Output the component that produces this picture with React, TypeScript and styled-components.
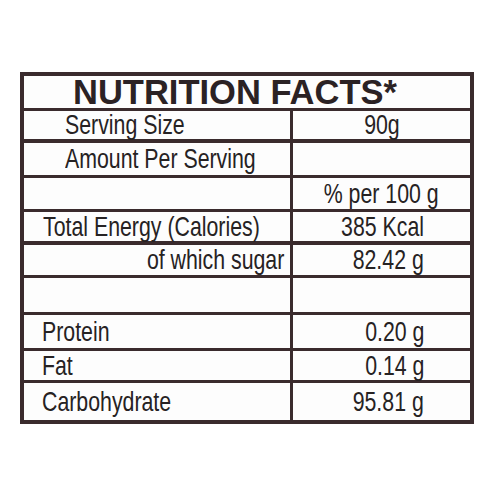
import React from "react";
import styled, { createGlobalStyle } from "styled-components";

const GlobalStyle = createGlobalStyle`
  html, body {
    margin: 0;
    padding: 0;
    background: #ffffff;
  }
  body {
    font-family: "Liberation Sans", Arial, sans-serif;
  }
`;

const Page = styled.div`
  width: 500px;
  height: 500px;
  box-sizing: border-box;
  padding: 72px 0 0 20px;
`;

const Label = styled.div`
  width: 454px;
  box-sizing: border-box;
  border: 4px solid #3a2b2d;
  background: #fdfdfd;
  color: #262223;
`;

const Title = styled.div`
  height: 35px;
  box-sizing: border-box;
  border-bottom: 3px solid #3a2b2d;
  padding-left: 49px;
  font-weight: 700;
  font-size: 34.5px;
  line-height: 33px;
  color: #2b2224;
  white-space: nowrap;
`;

const Row = styled.div<{ $h: number; $line?: number }>`
  display: grid;
  grid-template-columns: 269px 1fr;
  height: ${(p) => p.$h}px;
  box-sizing: border-box;
  border-bottom: ${(p) => p.$line ?? 3}px solid #3a2b2d;

  &:last-child {
    border-bottom: none;
  }
`;

const NameCell = styled.div<{ $indent?: number; $right?: boolean }>`
  display: flex;
  align-items: center;
  justify-content: ${(p) => (p.$right ? "flex-end" : "flex-start")};
  padding-left: ${(p) => p.$indent ?? 19}px;
  padding-right: ${(p) => (p.$right ? 6 : 0)}px;
  border-right: 3px solid #3a2b2d;
  overflow: visible;
`;

const ValueCell = styled.div<{ $center?: boolean }>`
  display: flex;
  align-items: center;
  justify-content: ${(p) => (p.$center ? "center" : "flex-end")};
  padding-right: ${(p) => (p.$center ? 0 : 46)}px;
`;

// the print uses a condensed grotesque; squeeze regular Liberation Sans to match
const Narrow = styled.span<{ $origin: "left" | "right" | "center" }>`
  display: inline-block;
  font-size: 27.5px;
  line-height: 1;
  white-space: nowrap;
  transform: scaleX(0.775);
  transform-origin: ${(p) => p.$origin} center;
`;

type Line = {
  name: string;
  value: string;
  h: number;
  line?: number;
  indent?: number;
  right?: boolean;
  center?: boolean;
};

const lines: Line[] = [
  { name: "Serving Size", value: "90g", h: 32, line: 4, indent: 41, center: true },
  { name: "Amount Per Serving", value: "", h: 35, indent: 41 },
  { name: "", value: "% per 100 g", h: 34, center: true },
  { name: "Total Energy (Calories)", value: "385 Kcal", h: 33, line: 4 },
  { name: "of which sugar", value: "82.42 g", h: 33, right: true },
  { name: "", value: "", h: 37 },
  { name: "Protein", value: "0.20 g", h: 36, indent: 18 },
  { name: "Fat", value: "0.14 g", h: 32, indent: 18 },
  { name: "Carbohydrate", value: "95.81 g", h: 37, indent: 18 },
];

const App = () => {
  return (
    <Page>
      <GlobalStyle />
      <Label>
        <Title>NUTRITION FACTS*</Title>
        {lines.map((l, i) => (
          <Row key={i} $h={l.h} $line={l.line}>
            <NameCell $indent={l.indent} $right={l.right}>
              {l.name && <Narrow $origin={l.right ? "right" : "left"}>{l.name}</Narrow>}
            </NameCell>
            <ValueCell $center={l.center}>
              {l.value && <Narrow $origin={l.center ? "center" : "right"}>{l.value}</Narrow>}
            </ValueCell>
          </Row>
        ))}
      </Label>
    </Page>
  );
};

export default App;
